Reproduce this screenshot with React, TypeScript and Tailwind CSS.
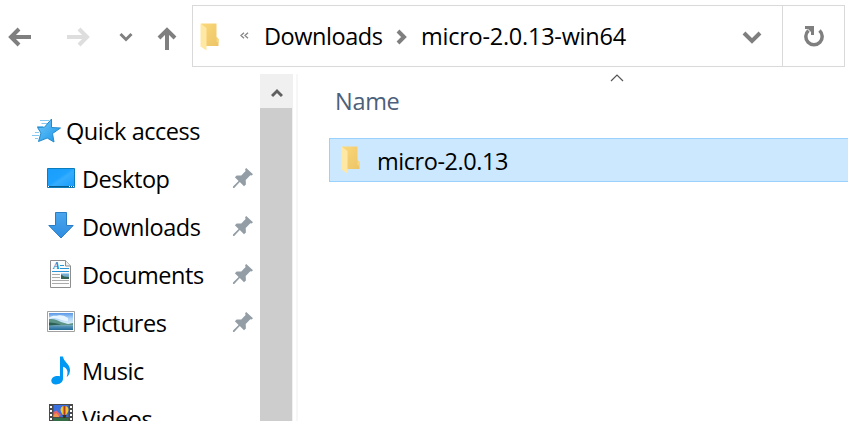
import type { ReactNode } from "react";

function Folder({ id }: { id: string }) {
  return (
    <svg width="20" height="28" viewBox="0 0 20 28" className="shrink-0">
      <defs>
        <linearGradient id={id} x1="0" y1="0" x2="1" y2="1">
          <stop offset="0" stopColor="#fbd97c" />
          <stop offset="1" stopColor="#ecc466" />
        </linearGradient>
      </defs>
      <path d="M1 .5h15.500v13.500l2 2V23H6L1 20z" fill={`url(#${id})`} />
      <path d="M.5.5 6.500 5v22.500L.5 23.500z" fill="#ffe8a3" />
      <path d="M16.500 14v5l2 1v-4z" fill="#f7d77f" />
    </svg>
  );
}

function Pin() {
  return (
    <svg width="20" height="20" viewBox="0 0 20 20" className="mb-0.5 ml-auto mr-[7px] shrink-0 fill-[#929da6]">
      <path d="M13.200 0 20 6.300l-1.400 1.300-1.300-.4-4.600 4.700.2 4.500-1.900 1.900-4.200-4.200L1.200 20 0 19.900v-1.300l5.600-5.700L1.900 9.200l1.800-1.800 4.600.1 4.300-4.400-.5-1.800z" />
    </svg>
  );
}

function Star() {
  return (
    <svg width="30" height="25" viewBox="0 0 30 25" className="shrink-0">
      <defs>
        <linearGradient id="star" x1="0" y1="0" x2="1" y2="1">
          <stop offset="0" stopColor="#72c8fb" />
          <stop offset="1" stopColor="#1795e8" />
        </linearGradient>
      </defs>
      <path d="M8 2.500h9M9.500 5.500h7M5 8.500h6M3 14.500h4M0 17.500h7M3 20.500h3" stroke="#85c8f2" />
      <path d="M19.500 1v8.500l9 .5-8 5.500L22 24l-6.800-4L6.500 23.500 9 15 5.500 9.500l7-.3z" fill="url(#star)" stroke="#238bcc" />
    </svg>
  );
}

function Desktop() {
  return (
    <svg width="28" height="20" viewBox="0 0 28 20" className="mb-0.5">
      <defs>
        <linearGradient id="desk" x1="0" y1="0" x2="1" y2="1">
          <stop offset="0" stopColor="#1a9dfc" />
          <stop offset=".45" stopColor="#1da2ff" />
          <stop offset=".55" stopColor="#35adff" />
          <stop offset="1" stopColor="#169bfa" />
        </linearGradient>
      </defs>
      <path d="M.5.5h27v19H.5z" fill="url(#desk)" stroke="#0b7dbd" />
      <path d="M1 18.500h26" stroke="#075c8d" />
      <path d="M1 18.500h1M22 18.500h1M24 18.500h1M26 18.500h1" stroke="#fff" />
    </svg>
  );
}

function Download() {
  return (
    <svg width="26" height="27" viewBox="0 0 26 27" className="mb-[3px]">
      <defs>
        <linearGradient id="down" x1="0" y1="0" x2="0" y2="1">
          <stop offset="0" stopColor="#4ba6ed" />
          <stop offset="1" stopColor="#2d8de0" />
        </linearGradient>
      </defs>
      <path d="M7.500.5h11v13h6.700L13 26 .8 13.500h6.700z" fill="url(#down)" stroke="#2a7cc5" />
    </svg>
  );
}

function Document() {
  return (
    <svg width="22" height="28" viewBox="0 0 22 28" className="mb-0.5">
      <path d="M.5.5h15l5 5.500v21.500H.5z" fill="#fcfcfc" stroke="#8e8e8e" />
      <path d="M15.500.5v5.500h5" fill="#eee" stroke="#8e8e8e" />
      <text x="3" y="9" fill="#1686cf" fontSize="10" fontWeight="700" fontStyle="italic" fontFamily="Liberation Serif, serif">A</text>
      <path d="M10 5.500h4M10 8.500h9M2 11.500h17" stroke="#2993d5" />
      <path d="M2 14.500h8M2 17.500h8M2 20.500h17M2 23.500h17" stroke="#aaa" />
      <path d="M11 13.500h8v5h-8z" fill="#76add2" />
      <path d="m11 14.500 3 2 5 .5v2h-8z" fill="#36634f" />
    </svg>
  );
}

function Picture() {
  return (
    <svg width="28" height="21" viewBox="0 0 28 21" className="mb-[3px]">
      <defs>
        <linearGradient id="sky" x1="0" y1="0" x2="0" y2="1">
          <stop offset="0" stopColor="#5b96e6" />
          <stop offset=".3" stopColor="#a9d2f8" />
          <stop offset=".65" stopColor="#e0f1fb" />
          <stop offset=".75" stopColor="#5f9bbd" />
          <stop offset="1" stopColor="#1f6a98" />
        </linearGradient>
      </defs>
      <path d="M.5.5h27v20H.5z" fill="#fff" stroke="#a1a1a1" />
      <path d="M2 2h24v17H2z" fill="url(#sky)" />
      <path d="M2 8c5-.5 9 1 12 3l7 2 5-1v2L2 14.500z" fill="#5d9488" />
      <path d="M2 11.500c5 0 8 1 12 2L2 14.500z" fill="#2c6055" />
      <path d="M2 7c3-3 6-2 9-2.500s6 0 10 2.500v3c-6 0-8-2-12-2.500S4 8 2 8z" fill="#e9f5fe" />
    </svg>
  );
}

function Music() {
  return (
    <svg width="20" height="29" viewBox="0 0 20 29" className="mb-0.5 fill-[#0098f3]">
      <path d="M9 .5h3c.5 5 7 7.500 7 13.500 0 3-1.200 5.200-2.500 6.500h-.8c2-5 .3-8.500-3.700-9.700v12C12 26.500 8 28.500 5 28.500c-2.800 0-4.700-1.500-4.700-3.800 0-3.300 4-5.600 8.700-4.500z" />
    </svg>
  );
}

function Video() {
  return (
    <svg width="24" height="28" viewBox="0 0 24 28" className="mb-0.5">
      <path d="M0 0h24v28H0z" fill="#4a4a4a" />
      <path d="M4.500 1h15v12h-15z" fill="#3a6fe0" />
      <path d="m4.500 8 3-1.500L12 11l-3 2H4.500z" fill="#e8606a" />
      <path d="m4.500 11 3-2 3 4h-6z" fill="#f0954a" />
      <path d="M15.500 2c3 0 4 2 4 4s-2 4-3 6h-2c-1-2-3-4-3-6s1-4 4-4z" fill="#f2c62c" />
      <path d="M15.500 2v9" stroke="#b53a2c" strokeWidth="2" />
      <path d="m13.500 11 1 3h2l1-3z" fill="#34331d" />
      <path d="M4.500 14h15v13h-15z" fill="#356e45" />
      <path d="M2 2v26M22 2v26" stroke="#fff" strokeWidth="2" strokeDasharray="2 2" />
    </svg>
  );
}

function NavRow({ icon, children, pinned = false }: { icon: ReactNode; children: ReactNode; pinned?: boolean }) {
  return (
    <div className="flex h-12 shrink-0 items-center">
      <div className="ml-[46px] flex w-[30px] shrink-0 justify-center">{icon}</div>
      <span className="ml-1.5">{children}</span>
      {pinned && <Pin />}
    </div>
  );
}

export default function App() {
  return (
    <div className="flex h-[421px] w-[848px] flex-col overflow-hidden whitespace-nowrap bg-white font-['Open_Sans',sans-serif] text-[23.5px] leading-8 tracking-[-0.45px] text-black">
      <header className="flex h-[73px] shrink-0 items-start pt-[5px]">
        <svg width="192" height="62" viewBox="0 0 192 62" fill="none" stroke="#7f7f7f" strokeWidth="4">
          <path d="M31 32H11M19 24l-8 8 8 8" />
          <path d="M67 32h20M79 24l8 8-8 8" stroke="#dedede" />
          <path d="m120.500 29 5.500 5.500 5.500-5.500" strokeWidth="3" />
          <path d="M167 45V25M159 33l8-8 8 8" />
        </svg>
        <div className="flex h-[62px] w-[653px] items-center border border-[#d9d9d9]">
          <div className="ml-[7px] mt-px"><Folder id="crumb" /></div>
          <svg width="9" height="8" viewBox="0 0 9 8" fill="none" stroke="#858585" strokeWidth="1.300" className="ml-5">
            <path d="M4 .8 1 3.500l3 2.700M8 .8 5 3.500l3 2.700" />
          </svg>
          <span className="ml-[15px] w-[119px]">Downloads</span>
          <svg width="12" height="16" viewBox="0 0 12 16" fill="none" stroke="#7f7f7f" strokeWidth="4" className="ml-[13px] mt-0.5">
            <path d="m2 2 6 6-6 6" />
          </svg>
          <span className="ml-[13px] tracking-[-0.25px]">micro-2.0.13-win64</span>
          <svg width="20" height="14" viewBox="0 0 20 14" fill="none" stroke="#7f7f7f" strokeWidth="4" className="ml-auto mr-5 mt-[3px]">
            <path d="m2 2 8 8 8-8" />
          </svg>
          <div className="flex h-full w-[62px] items-center justify-center border-l border-[#d9d9d9]">
            <svg width="22" height="24" viewBox="0 0 22 24" fill="none" stroke="#7f7f7f" strokeWidth="3.500">
              <path d="M5.500 6.500a8.200 8.200 0 1 0 11 0" />
              <path d="M2 3.500h7.500V11" strokeWidth="3" />
              <path d="m4 4 5 5V4z" fill="#7f7f7f" stroke="none" />
            </svg>
          </div>
        </div>
      </header>
      <main className="flex h-[348px]">
        <nav className="flex w-[260px] shrink-0 flex-col overflow-hidden pt-[34px]">
          <div className="flex h-12 shrink-0 items-center">
            <div className="mb-0.5 ml-8 flex"><Star /></div>
            <span className="ml-1">Quick access</span>
          </div>
          <NavRow icon={<Desktop />} pinned>Desktop</NavRow>
          <NavRow icon={<Download />} pinned>Downloads</NavRow>
          <NavRow icon={<Document />} pinned>Documents</NavRow>
          <NavRow icon={<Picture />} pinned>Pictures</NavRow>
          <NavRow icon={<Music />}>Music</NavRow>
          <NavRow icon={<Video />}>Videos</NavRow>
        </nav>
        <div className="mt-px flex w-[33px] shrink-0 flex-col bg-[#f0f0f0]">
          <div className="flex h-[34px] items-center justify-center pt-[3px]">
            <svg width="12" height="10" viewBox="0 0 12 10" fill="none" stroke="#606060" strokeWidth="3">
              <path d="m1 8 5-5 5 5" />
            </svg>
          </div>
          <div className="mr-px flex-1 bg-[#cdcdcd]" />
        </div>
        <div className="ml-[3px] mt-px w-0.5 shrink-0 bg-[#f7f7f7]" />
        <section className="min-w-0 flex-1 pl-[31px]">
          <div className="flex h-2 pl-[281px]">
            <svg width="14" height="9" viewBox="0 0 14 9" fill="none" stroke="#555" strokeWidth="1.200">
              <path d="m1 8 6-6 6 6" />
            </svg>
          </div>
          <div className="flex h-[57px] pl-[6px] pt-1 tracking-[-0.3px] text-[#4c607a]">Name</div>
          <div className="flex h-11 items-center border border-r-0 border-[#99d1ff] bg-[#cce8ff]">
            <div className="ml-[11px]"><Folder id="file" /></div>
            <span className="ml-4 pt-0.5">micro-2.0.13</span>
          </div>
        </section>
      </main>
    </div>
  );
}
